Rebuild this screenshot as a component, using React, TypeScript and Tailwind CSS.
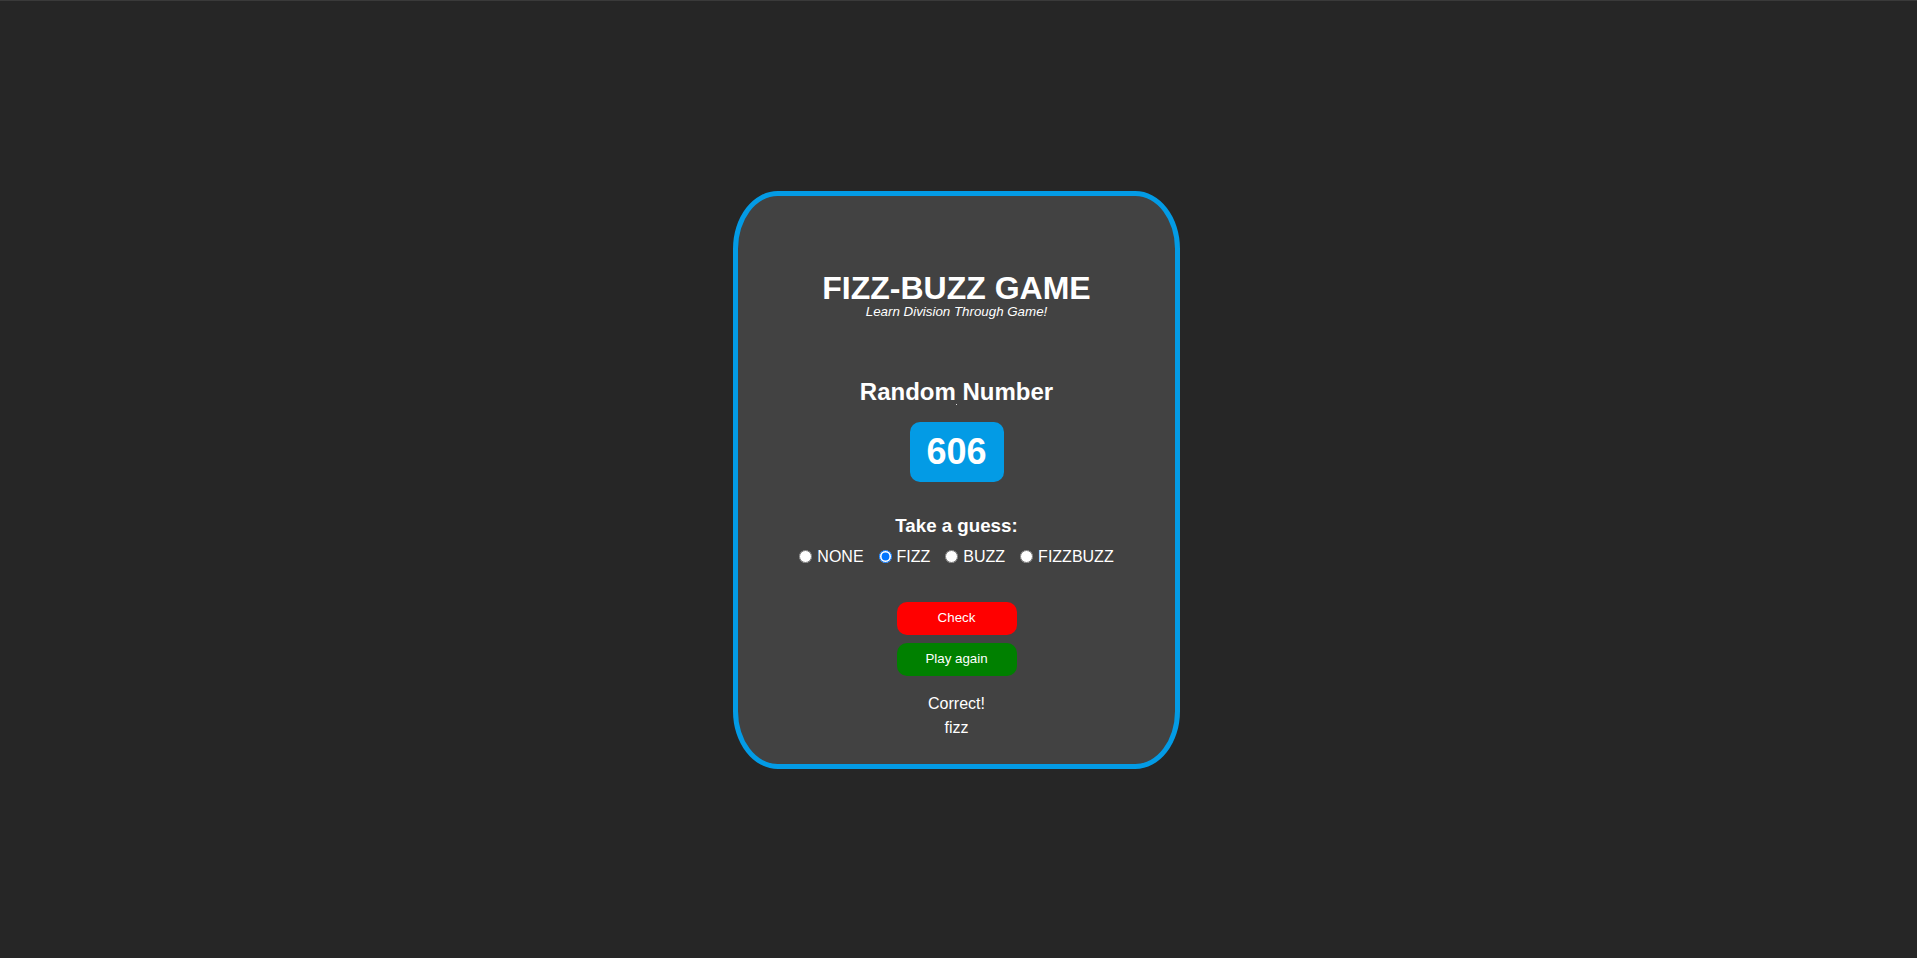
import { useState } from "react";

const OPTIONS = ["NONE", "FIZZ", "BUZZ", "FIZZBUZZ"];

export default function App() {
  const [guess, setGuess] = useState("FIZZ");

  return (
    <div className="h-screen w-full flex items-center justify-center pr-[4px] bg-[#262626] border-t border-[#3a3a3a] font-['Liberation_Sans',Arial,sans-serif] text-white">
      {/* Game card */}
      <div className="w-[447px] h-[578px] rounded-[10%] border-[5px] border-[#039be5] bg-[#424242] flex flex-col items-center pt-[74px]">
        <h1 className="text-[32px] leading-[37px] font-bold">FIZZ-BUZZ GAME</h1>
        <p className="-mt-[3px] text-[13.33px] leading-[15px] italic">Learn Division Through Game!</p>

        <div className="relative mt-[59px]">
          <h2 className="text-[24px] leading-[28px] font-bold">Random Number</h2>
          <span className="absolute left-1/2 top-[26px] w-px h-px bg-white/80" />
        </div>

        <div className="mt-[16px] w-[94px] h-[60px] rounded-[10px] bg-[#039be5] flex items-center justify-center">
          <span className="text-[36px] font-bold">606</span>
        </div>

        <h3 className="mt-[33px] text-[18.72px] leading-[22px] font-bold">Take a guess:</h3>

        <div className="mt-[11px] h-[18px] flex items-center gap-[15px] text-[16px] leading-[18px]">
          {OPTIONS.map((opt) => (
            <label key={opt} className="flex items-center gap-[5px] cursor-pointer">
              <input
                type="radio"
                name="guess"
                checked={guess === opt}
                onChange={() => setGuess(opt)}
                className="m-0 w-[13px] h-[13px]"
              />
              <span>{opt}</span>
            </label>
          ))}
        </div>

        <button className="mt-[36px] w-[120px] h-[33px] rounded-[10px] bg-[#ff0000] text-[13.33px] text-white">
          Check
        </button>
        <button className="mt-[8px] w-[120px] h-[33px] rounded-[10px] bg-[#008000] text-[13.33px] text-white">
          Play again
        </button>

        <div className="mt-[16px] text-[16px] leading-6 text-center">
          <p>Correct!</p>
          <p>fizz</p>
        </div>
      </div>
    </div>
  );
}
